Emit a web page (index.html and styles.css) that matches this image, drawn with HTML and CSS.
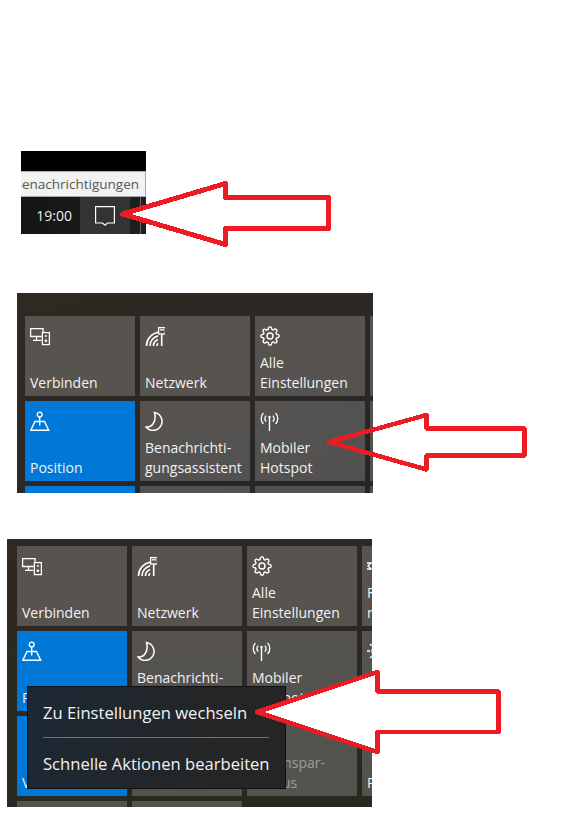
FILE: index.html
```html
<!DOCTYPE html>
<html lang="de">
<head>
    <meta charset="UTF-8">
    <meta name="viewport" content="width=device-width, initial-scale=1.0">
    <title>Schnelle Aktionen</title>
    <link rel="stylesheet" href="styles.css">
</head>
<body>
    <!-- Taskbar -->
    <section class="shot shot-taskbar">
        <div class="taskbar-shot">
            <div class="taskbar-top"></div>
            <div class="tooltip"><span>Benachrichtigungen</span></div>
            <div class="taskbar">
                <span class="clock">19:00</span>
                <div class="notify-btn">
                    <svg width="22" height="22" viewBox="0 0 22 22" fill="none" stroke="#fff" stroke-width="1.2">
                        <path d="M1.6 1.6H20.4V18H13.5L11 20.3L8.5 18H1.6Z"/>
                    </svg>
                </div>
                <div class="show-desktop"></div>
            </div>
        </div>
        <svg class="arrow arrow-one" width="222" height="76" viewBox="115 176 222 76">
            <polygon points="122.5,214 225.5,183.5 225.5,197.5 328.5,197.5 328.5,228.5 225.5,228.5 225.5,244.5"/>
        </svg>
    </section>

    <!-- Action center -->
    <section class="shot shot-tiles">
        <div class="panel panel-a">
            <div class="tile">
                <svg class="icon" width="20" height="20" viewBox="0 0 20 20"><use href="#i-connect"/></svg>
                <span class="label">Verbinden</span>
            </div>
            <div class="tile">
                <svg class="icon" width="20" height="20" viewBox="0 0 20 20"><use href="#i-network"/></svg>
                <span class="label">Netzwerk</span>
            </div>
            <div class="tile">
                <svg class="icon" width="20" height="20" viewBox="0 0 24 24"><use href="#i-gear"/></svg>
                <span class="label">Alle<br>Einstellungen</span>
            </div>
            <div class="tile"></div>
            <div class="tile tile-on">
                <svg class="icon" width="20" height="20" viewBox="0 0 20 20"><use href="#i-position"/></svg>
                <span class="label">Position</span>
            </div>
            <div class="tile">
                <svg class="icon" width="20" height="20" viewBox="0 0 20 20"><use href="#i-moon"/></svg>
                <span class="label">Benachrichti-<br>gungsassistent</span>
            </div>
            <div class="tile">
                <svg class="icon" width="20" height="20" viewBox="0 0 20 20"><use href="#i-antenna"/></svg>
                <span class="label">Mobiler<br>Hotspot</span>
            </div>
            <div class="tile"></div>
            <div class="tile tile-on"></div>
            <div class="tile"></div>
            <div class="tile"></div>
            <div class="tile"></div>
        </div>
        <svg class="arrow arrow-two" width="210" height="70" viewBox="320 408 210 70">
            <polygon points="329,442 426.5,415 426.5,428.5 524.5,428.5 524.5,455.5 426.5,455.5 426.5,469.5"/>
        </svg>
    </section>

    <!-- Action center with context menu -->
    <section class="shot shot-menu">
        <div class="panel panel-b">
            <div class="tile">
                <svg class="icon" width="20" height="20" viewBox="0 0 20 20"><use href="#i-connect"/></svg>
                <span class="label">Verbinden</span>
            </div>
            <div class="tile">
                <svg class="icon" width="20" height="20" viewBox="0 0 20 20"><use href="#i-network"/></svg>
                <span class="label">Netzwerk</span>
            </div>
            <div class="tile">
                <svg class="icon" width="20" height="20" viewBox="0 0 24 24"><use href="#i-gear"/></svg>
                <span class="label">Alle<br>Einstellungen</span>
            </div>
            <div class="tile">
                <svg class="icon" width="20" height="20" viewBox="0 0 20 20"><use href="#i-project"/></svg>
                <span class="label">Freigabe<br>nah</span>
            </div>
            <div class="tile tile-on">
                <svg class="icon" width="20" height="20" viewBox="0 0 20 20"><use href="#i-position"/></svg>
                <span class="label">Position</span>
            </div>
            <div class="tile">
                <svg class="icon" width="20" height="20" viewBox="0 0 20 20"><use href="#i-moon"/></svg>
                <span class="label">Benachrichti-<br>gungsassistent</span>
            </div>
            <div class="tile">
                <svg class="icon" width="20" height="20" viewBox="0 0 20 20"><use href="#i-antenna"/></svg>
                <span class="label">Mobiler<br>Hotspot</span>
            </div>
            <div class="tile">
                <svg class="icon" width="20" height="20" viewBox="0 0 20 20"><use href="#i-sun"/></svg>
            </div>
            <div class="tile tile-on">
                <span class="label">VPN</span>
            </div>
            <div class="tile"></div>
            <div class="tile">
                <span class="label label-off">Stromspar-<br>modus</span>
            </div>
            <div class="tile">
                <span class="label">Projizieren</span>
            </div>
            <div class="tile"></div>
            <div class="tile"></div>
        </div>
        <div class="menu">
            <div class="menu-item">Zu Einstellungen wechseln</div>
            <div class="menu-sep"></div>
            <div class="menu-item">Schnelle Aktionen bearbeiten</div>
        </div>
        <svg class="arrow arrow-three" width="252" height="96" viewBox="252 664 252 96">
            <polygon points="257,712 377.5,672 377.5,691.5 498.5,691.5 498.5,732 377.5,732 377.5,752"/>
        </svg>
    </section>

    <!-- shared icons -->
    <svg class="icon-defs" width="0" height="0">
        <defs>
            <g id="i-connect" fill="none" stroke="#fff" stroke-width="1.3">
                <path d="M11.8 10.5H.6V2.6H13V6"/>
                <path d="M6.5 10.5V14.4M3 14.4H11.5"/>
                <rect x="12.4" y="6.6" width="7" height="12"/>
                <circle cx="15.9" cy="10" r="1" fill="#fff" stroke="none"/>
                <circle cx="15.9" cy="14.7" r="1.3" fill="#fff" stroke="none"/>
            </g>
            <g id="i-network" fill="none" stroke="#fff" stroke-width="1.6">
                <path d="M1.5 20A14 14 0 0 1 13 6.3"/>
                <path d="M5 20A10.5 10.5 0 0 1 13 9.9"/>
                <path d="M8.5 20A7 7 0 0 1 13 13.5"/>
                <path d="M12 20A3.5 3.5 0 0 1 13 17.3"/>
                <rect x="13.6" y="1.6" width="6.8" height="6.4" stroke-width="1.3"/>
                <path d="M15 3.8H19" stroke-width="1.3"/>
                <path d="M16.7 8V20"/>
            </g>
            <g id="i-gear" fill="none" stroke="#fff" stroke-width="1.7">
                <circle cx="12" cy="12" r="3.6"/>
                <path d="M19.4 15a1.65 1.65 0 0 0 .33 1.82l.06.06a2 2 0 0 1 0 2.83 2 2 0 0 1-2.83 0l-.06-.06a1.65 1.65 0 0 0-1.82-.33 1.65 1.65 0 0 0-1 1.51V21a2 2 0 0 1-2 2 2 2 0 0 1-2-2v-.09A1.65 1.65 0 0 0 9 19.4a1.65 1.65 0 0 0-1.82.33l-.06.06a2 2 0 0 1-2.83 0 2 2 0 0 1 0-2.83l.06-.06a1.65 1.65 0 0 0 .33-1.82 1.65 1.65 0 0 0-1.51-1H3a2 2 0 0 1-2-2 2 2 0 0 1 2-2h.09A1.65 1.65 0 0 0 4.6 9a1.65 1.65 0 0 0-.33-1.82l-.06-.06a2 2 0 0 1 0-2.83 2 2 0 0 1 2.83 0l.06.06a1.65 1.65 0 0 0 1.82.33H9a1.65 1.65 0 0 0 1-1.51V3a2 2 0 0 1 2-2 2 2 0 0 1 2 2v.09a1.65 1.65 0 0 0 1 1.51 1.65 1.65 0 0 0 1.82-.33l.06-.06a2 2 0 0 1 2.83 0 2 2 0 0 1 0 2.83l-.06.06a1.65 1.65 0 0 0-.33 1.82V9a1.65 1.65 0 0 0 1.51 1H21a2 2 0 0 1 2 2 2 2 0 0 1-2 2h-.09a1.65 1.65 0 0 0-1.51 1z"/>
            </g>
            <g id="i-position" fill="none" stroke="#fff" stroke-width="1.4">
                <circle cx="9.7" cy="3.5" r="2.4"/>
                <path d="M9.7 6V14.5"/>
                <path d="M5 10.5H14.5L18.7 19.3H.8Z"/>
            </g>
            <g id="i-moon" fill="none" stroke="#fff" stroke-width="1.5">
                <path d="M9.5 1.5A9 9 0 1 1 1 16C6.5 16.5 12 11 9.5 1.5Z"/>
            </g>
            <g id="i-antenna" fill="none" stroke="#fff" stroke-width="1.3">
                <path d="M9.5 6V20" stroke-width="1.4"/>
                <circle cx="9.5" cy="6" r="1.2" fill="#fff" stroke="none"/>
                <path d="M3.4 2A8 8 0 0 0 3.4 13M15.6 2A8 8 0 0 1 15.6 13"/>
                <path d="M6.2 4.6A4.5 4.5 0 0 0 6.2 10.6M12.8 4.6A4.5 4.5 0 0 1 12.8 10.6"/>
            </g>
            <g id="i-sun" fill="none" stroke="#fff" stroke-width="1.3">
                <circle cx="10" cy="10" r="5"/>
                <path d="M0 10H3M3 3L5 5M3 17L5 15M10 0V3M10 17V20"/>
            </g>
            <g id="i-project" fill="none" stroke="#fff" stroke-width="1.3">
                <path d="M0 7H4L1 10L4 13H0"/>
            </g>
        </defs>
    </svg>
</body>
</html>
```

FILE: styles.css
```css
/* page */
body {
    margin: 0;
    background-color: #fff;
    font-family: "Open Sans", "Liberation Sans", sans-serif;
    color: #f2f2f2;
}

.shot {
    position: relative;
}

.shot-taskbar {
    padding: 151px 0 0 21px;
}

.shot-tiles {
    padding: 59px 0 0 17px;
}

.shot-menu {
    padding: 46px 0 0 7px;
}

.icon-defs {
    display: block;
}

/* taskbar crop */
.taskbar-shot {
    width: 125px;
    height: 83px;
    display: flex;
    flex-direction: column;
    overflow: hidden;
    background-color: #000;
}

.taskbar-top {
    height: 20px;
    flex: none;
}

.tooltip {
    height: 24px;
    flex: none;
    display: flex;
    justify-content: flex-end;
    align-items: center;
    padding-right: 6px;
    background-color: #f2f2f2;
    border: 1px solid #a9a9a9;
    border-left: 0;
    color: #575757;
    font-size: 13.5px;
    white-space: nowrap;
}

.taskbar {
    flex: 1;
    display: flex;
    align-items: stretch;
    background: linear-gradient(90deg, #141414, #1f1f1f);
}

.clock {
    width: 59px;
    padding-right: 8px;
    box-sizing: border-box;
    text-align: right;
    align-self: center;
    font-size: 14px;
    color: #ececec;
}

.notify-btn {
    width: 50px;
    display: flex;
    align-items: center;
    justify-content: center;
    background-color: #333;
}

.show-desktop {
    width: 10px;
    border-right: 1px solid #666;
}

/* action center */
.panel {
    display: grid;
    grid-template-columns: repeat(4, 110px);
    grid-auto-rows: 80px;
    gap: 5px;
    overflow: hidden;
}

.panel-a {
    width: 348px;
    height: 177px;
    padding: 23px 0 0 8px;
    background: linear-gradient(160deg, #2f2823, #2c2825 55%, #262626);
}

.panel-b {
    width: 355px;
    height: 261px;
    padding: 7px 0 0 10px;
    background: linear-gradient(170deg, #2f2823, #2a2924 70%, #262a1f);
}

.tile {
    display: flex;
    flex-direction: column;
    padding: 10px 5px 3px;
    box-sizing: border-box;
    min-width: 0;
    background-color: rgba(255, 255, 255, 0.2);
    white-space: nowrap;
}

.tile-on {
    background-color: #0078d7;
}

.icon {
    display: block;
    flex: none;
}

.label {
    margin-top: auto;
    font-size: 14px;
    line-height: 20px;
}

.label-off {
    opacity: 0.45;
}

/* context menu */
.menu {
    position: absolute;
    left: 27px;
    top: 193px;
    width: 259px;
    height: 103px;
    box-sizing: border-box;
    padding: 0 16px 0 15px;
    display: flex;
    flex-direction: column;
    background: linear-gradient(100deg, #1b2834, #252525 75%);
    border: 1px solid #111;
    font-size: 16.6px;
}

.menu-item {
    flex: 1;
    display: flex;
    align-items: center;
    white-space: nowrap;
}

.menu-sep {
    height: 1px;
    flex: none;
    background-color: #6f7377;
}

/* arrows */
.arrow {
    position: absolute;
    stroke: #ed1c24;
    stroke-linejoin: round;
    shape-rendering: crispEdges;
}

.arrow-one {
    left: 115px;
    top: 176px;
    fill: #fff;
    stroke-width: 5px;
}

.arrow-two {
    left: 320px;
    top: 174px;
    fill: none;
    stroke-width: 4.5px;
}

.arrow-three {
    left: 252px;
    top: 171px;
    fill: #fff;
    stroke-width: 4.5px;
}
```
